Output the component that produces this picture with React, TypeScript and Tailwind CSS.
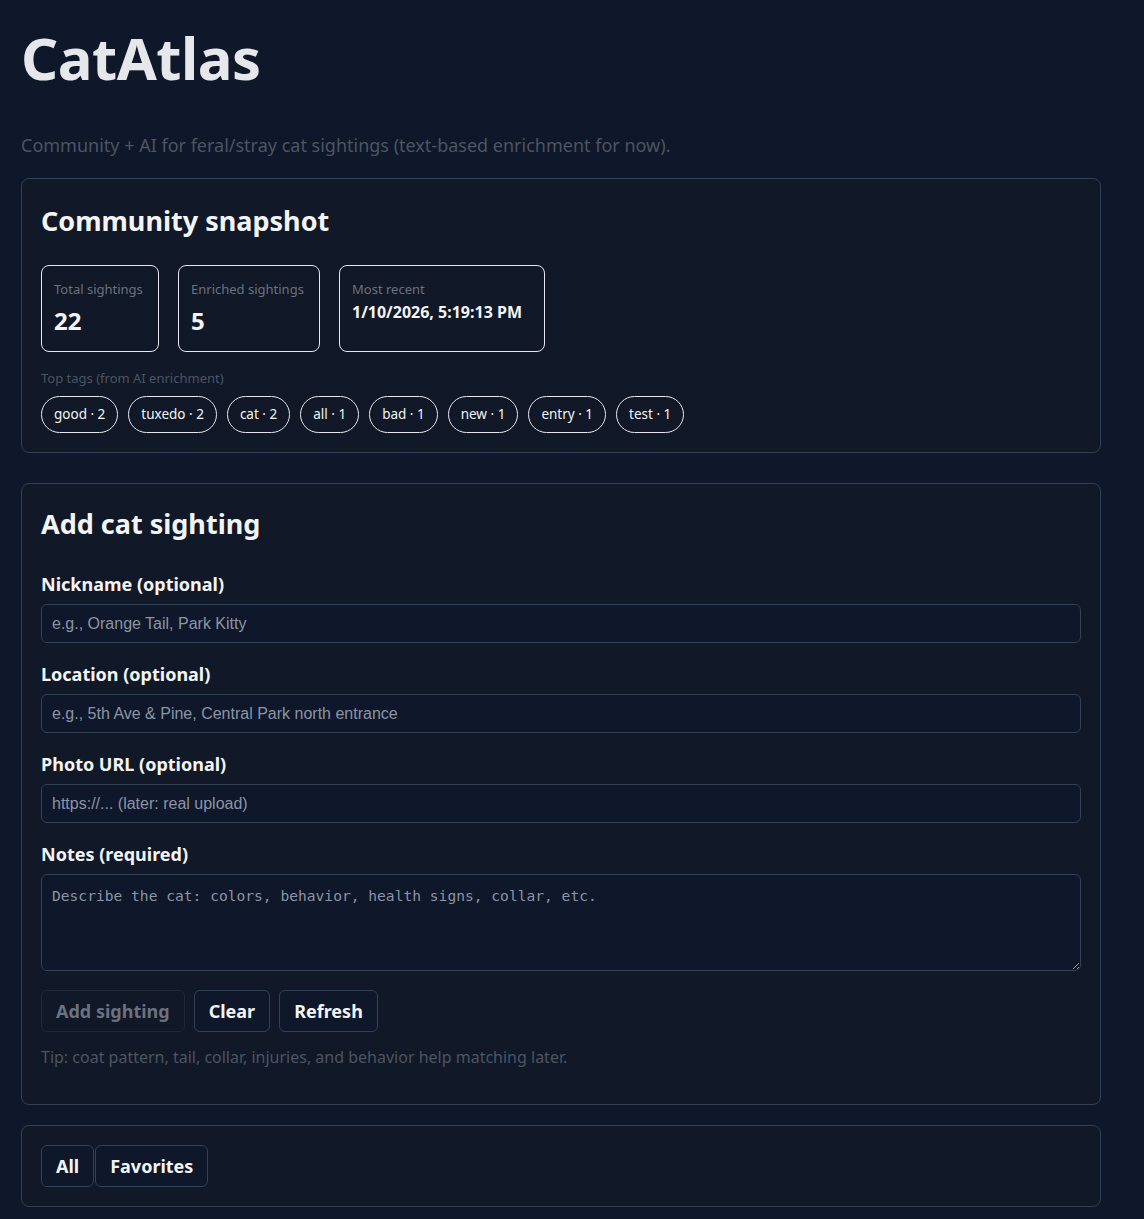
import { useState } from 'react'

type Tag = { name: string, count: number }

const tags: Tag[] = [
    { name: 'good', count: 2 },
    { name: 'tuxedo', count: 2 },
    { name: 'cat', count: 2 },
    { name: 'all', count: 1 },
    { name: 'bad', count: 1 },
    { name: 'new', count: 1 },
    { name: 'entry', count: 1 },
    { name: 'test', count: 1 },
]

const font = { fontFamily: '"Noto Sans", "Open Sans", sans-serif' }

const btn = 'h-[42px] rounded-[6px] border border-[#334155] bg-[#0f172a] px-[14px] text-[18px] font-bold text-[#f3f4f6]'

// Stat box
const Stat = ({ label, value, small }: { label: string, value: string, small?: boolean }) => (
    <div className='border border-gray-200 rounded-[8px] px-[12px] pt-[14px] pb-[14px] h-[87px]'>
        <div className='text-[13px] text-[#6b7280] leading-[18px]'>{label}</div>
        {small ?
            <div className='text-[16px] font-bold text-[#f3f4f6] mt-[3px] leading-[22px]'>{value}</div> :
            <div className='text-[24px] font-bold text-[#f3f4f6] mt-[7px] leading-[32px]'>{value}</div>
        }
    </div>
)

const Field = ({ label, placeholder }: { label: string, placeholder: string }) => (
    <div className='flex flex-col'>
        <label className='text-[18px] font-bold text-[#f3f4f6] leading-[24px] mb-[8px]'>{label}</label>
        <input
            placeholder={placeholder}
            className="h-[39px] w-full rounded-[6px] border border-[#334155] bg-[#0f172a] px-[10px] text-[16px] text-gray-200 placeholder:text-[#8b95a5] outline-none"
            style={{ fontFamily: '"Liberation Sans", Arial, sans-serif' }}
        />
    </div>
)

const App = () => {
    const [tab, setTab] = useState('all')

    return (
        <div className='min-h-[1219px] bg-[#0f172a] px-[21px] pt-[20px] pb-[14px] text-gray-100' style={font}>

            <h1 className='text-[58px] font-bold leading-[76px] text-[#e5e7eb] tracking-[-0.5px]'>CatAtlas</h1>

            <p className='mt-[37px] text-[18px] text-[#4b5563] leading-[24px]'>
                Community + AI for feral/stray cat sightings (text-based enrichment for now).
            </p>

            {/* Snapshot */}
            <section className='mt-[21px] w-[1080px] rounded-[8px] border border-[#334155] bg-[#111827] px-[19px] pt-[22px] pb-[19px]'>
                <h2 className='text-[27px] font-bold leading-[40px] text-[#f3f4f6]'>Community snapshot</h2>

                <div className='mt-[24px] flex gap-[19px]'>
                    <div className='w-[118px]'><Stat label='Total sightings' value='22' /></div>
                    <div className='w-[142px]'><Stat label='Enriched sightings' value='5' /></div>
                    <div className='w-[206px]'><Stat label='Most recent' value='1/10/2026, 5:19:13 PM' small /></div>
                </div>

                <div className='mt-[17px] text-[13px] text-[#4b5563] leading-[18px]'>Top tags (from AI enrichment)</div>
                <div className='mt-[9px] flex gap-[10px] flex-wrap'>
                    {tags.map((t) => (
                        <span key={t.name} className='h-[37px] rounded-full border border-gray-200 px-[12px] flex items-center text-[13.5px] text-[#f3f4f6]'>
                            {t.name} · {t.count}
                        </span>
                    ))}
                </div>
            </section>

            {/* Form */}
            <section className='mt-[30px] w-[1080px] rounded-[8px] border border-[#334155] bg-[#111827] px-[19px] pt-[20px] pb-[36px]'>
                <h2 className='text-[27px] font-bold leading-[40px] text-[#f3f4f6]'>Add cat sighting</h2>

                <div className='mt-[28px] flex flex-col gap-[19px]'>
                    <Field label='Nickname (optional)' placeholder='e.g., Orange Tail, Park Kitty' />
                    <Field label='Location (optional)' placeholder='e.g., 5th Ave & Pine, Central Park north entrance' />
                    <Field label='Photo URL (optional)' placeholder='https://... (later: real upload)' />

                    <div className='flex flex-col'>
                        <label className='text-[18px] font-bold text-[#f3f4f6] leading-[24px] mb-[8px]'>Notes (required)</label>
                        <textarea
                            placeholder='Describe the cat: colors, behavior, health signs, collar, etc.'
                            className='h-[97px] w-full rounded-[6px] border border-[#334155] bg-[#0f172a] px-[10px] py-[10px] text-[14.6px] text-gray-200 placeholder:text-[#8b95a5] outline-none'
                            style={{ fontFamily: '"DejaVu Sans Mono", "Liberation Mono", monospace' }}
                        />
                    </div>
                </div>

                <div className='mt-[19px] flex gap-[9px]'>
                    <button disabled className='h-[42px] rounded-[6px] border border-[#1f2937] bg-[#111827] px-[14px] text-[18px] font-bold text-[#6b7280]'>Add sighting</button>
                    <button className={btn}>Clear</button>
                    <button className={btn}>Refresh</button>
                </div>

                <p className='mt-[14px] text-[16px] text-[#4b5563] leading-[22px]'>Tip: coat pattern, tail, collar, injuries, and behavior help matching later.</p>
            </section>

            {/* Filter */}
            <section className='mt-[20px] w-[1080px] rounded-[8px] border border-[#334155] bg-[#111827] px-[19px] py-[19px] flex'>
                <button onClick={() => setTab('all')} className={tab === 'all' ? btn : btn}>All</button>
                <button onClick={() => setTab('fav')} className={'ml-[1px] ' + btn}>Favorites</button>
            </section>
        </div>
    )
}

export default App
